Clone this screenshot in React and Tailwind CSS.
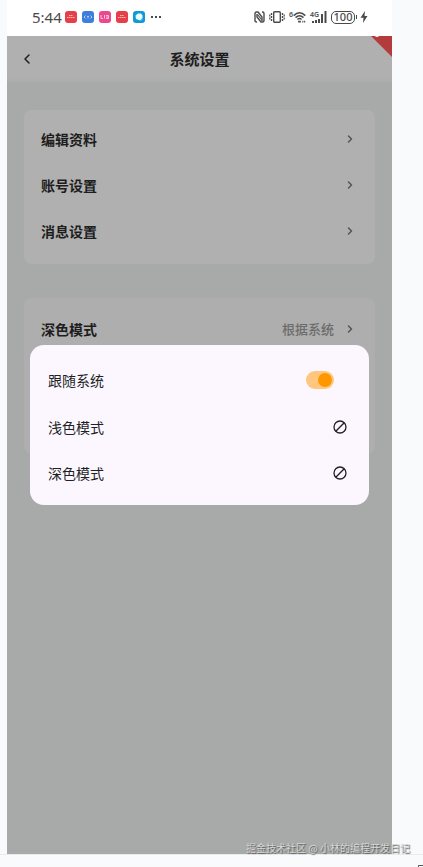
import React, { useState } from "react";
import { ChevronLeft, ChevronRight } from "lucide-react";

const accountRows = ["编辑资料", "账号设置", "消息设置"];

function AppBadge({ className, children }) {
  return (
    <svg viewBox="0 0 12 12" className={`size-3 rounded-[3px] ${className}`} aria-hidden="true">
      {children}
    </svg>
  );
}

function StatusBar() {
  return (
    <div className="flex h-9 shrink-0 items-center justify-between bg-white pr-6 pb-[2px] pl-[25px] text-[#4a4a4a]">
      <div className="flex items-center gap-[3px]">
        <span className="font-['Noto_Sans',sans-serif] text-[15px] leading-5">5:44</span>
        <div className="flex items-center gap-[5px]">
          <AppBadge className="bg-[#e5404a]">
            <path d="M2 6.5h8M4 4.5h4" stroke="#ffb9b4" strokeWidth="1" strokeDasharray="1.5 .5" />
          </AppBadge>
          <AppBadge className="bg-[#3f7fdc]">
            <path d="M3.5 4.5 2 6l1.5 1.5M8.5 4.5 10 6 8.5 7.5M5 5l1 1 1-1M6 6v1.5" fill="none" stroke="#c4dcff" strokeWidth=".8" />
          </AppBadge>
          <AppBadge className="bg-[#ea4a8d]">
            <path d="M2 4v3.5h2M5.5 4v3.5M7 4.5h2.5v3H7M7 6h2.5" fill="none" stroke="#ffd0e4" strokeWidth=".9" />
          </AppBadge>
          <AppBadge className="bg-[#e5404a]">
            <path d="M2 6.5h8M4 4.5h4" stroke="#ffb9b4" strokeWidth="1" strokeDasharray="1.5 .5" />
          </AppBadge>
          <AppBadge className="bg-[#0d9bd7]">
            <path d="M2.500 4.500 5 2.500H8L9.500 4.500V7L7 9.500 3 8Z" fill="#e9fbff" />
            <path d="M8 9.500 9.500 8" stroke="#7be0ff" strokeWidth=".8" />
          </AppBadge>
          <svg width="12" height="4" viewBox="0 0 12 4" fill="#4a4a4a" aria-hidden="true">
            <rect x="1" y="1" width="2" height="2" />
            <rect x="5" y="1" width="2" height="2" />
            <rect x="9" y="1" width="2" height="2" />
          </svg>
        </div>
      </div>
      <div className="flex items-center gap-1">
        <svg width="11" height="12" viewBox="0 0 11 12" fill="none" stroke="#4a4a4a" aria-hidden="true">
          <path d="M3 11H2.5Q1 11 1 9.500v-7Q1 1 2.500 1H4L8 6v4M8 1h.5Q10 1 10 2.500v7Q10 11 8.500 11H7L3 6V3" strokeWidth="1.400" />
          <path d="M3.500 3.500 7.500 8.500" strokeWidth="1.200" />
        </svg>
        <svg width="16" height="12" viewBox="0 0 16 12" fill="none" stroke="#4a4a4a" aria-hidden="true">
          <rect x="4.700" y=".7" width="6.600" height="10.600" rx="1" strokeWidth="1.400" />
          <path d="M2.500 2v8M13.500 2v8" strokeWidth="1.400" strokeDasharray="2 1" />
          <path d="M.8 3.500v5M15.200 3.500v5" strokeWidth="1.200" strokeDasharray="2 1" />
        </svg>
        <div className="flex items-start">
          <span className="font-['Noto_Sans',sans-serif] text-[7px] leading-[7px] font-semibold">6</span>
          <svg width="13" height="12" viewBox="0 0 14 13" fill="none" stroke="#4a4a4a" aria-hidden="true">
            <path d="M.7 5Q7-1.200 13.300 5M2.700 7.200q4.300-4 8.600 0M4.700 9.200q2.300-2 4.600 0" strokeWidth="1.600" />
            <path d="M5.500 11.500h3M10 11.500h1.200M12 11.500h1.200" strokeWidth="1.800" />
          </svg>
        </div>
        <div className="flex items-start">
          <span className="h-3 font-['Noto_Sans',sans-serif] text-[7px] leading-[7px] font-semibold">4G</span>
          <svg width="15" height="12" viewBox="0 0 15 12" fill="#4a4a4a" className="-ml-[7px]" aria-hidden="true">
            <rect x="0" y="10" width="2" height="2" />
            <rect x="3" y="9" width="2" height="3" />
            <rect x="6" y="8" width="2" height="4" />
            <rect x="9" y="3" width="2" height="9" />
            <rect x="12.500" y="0" width="2" height="12" />
          </svg>
        </div>
        <div className="flex items-center gap-px">
          <span className="flex h-[13px] w-6 items-center justify-center rounded-[5px] border border-[#4a4a4a] font-['Noto_Sans',sans-serif] text-[11px] leading-3 font-medium">
            100
          </span>
          <span className="h-1 w-px bg-[#4a4a4a]" />
          <svg width="8" height="12" viewBox="0 0 8 12" fill="#4a4a4a" className="ml-[2px]" aria-hidden="true">
            <path d="M5 0 .5 6.800H3.500L3 12 7.500 5H4.500Z" />
          </svg>
        </div>
      </div>
    </div>
  );
}

function SettingRow({ label, value }) {
  return (
    <button type="button" className="flex h-[46px] w-full items-center text-left">
      <span className="flex-1 text-[14px] leading-5 font-bold text-[#1d1d1d]">{label}</span>
      {value && <span className="mr-[10px] text-[13px] leading-5 font-medium text-[#6c6c6c]">{value}</span>}
      <ChevronRight size={12} strokeWidth={3} className="text-[#555]" aria-hidden="true" />
    </button>
  );
}

function ModeOption({ label, checked, onSelect }) {
  return (
    <label className="flex h-[46px] cursor-pointer items-center justify-between">
      <span>{label}</span>
      <input type="radio" name="mode" className="sr-only" checked={checked} onChange={onSelect} />
      <svg width="14" height="14" viewBox="0 0 14 14" fill="none" stroke="#211f26" strokeWidth="1.300" aria-hidden="true">
        <circle cx="7" cy="7" r="6" />
        <path d="M2.800 11.200 11.200 2.800" />
      </svg>
    </label>
  );
}

function ModeDialog() {
  const [follow, setFollow] = useState(true);
  const [mode, setMode] = useState("");
  return (
    <div role="dialog" aria-label="深色模式" className="w-full rounded-[14px] bg-[#fcf7fe] pt-[11px] pr-[22px] pb-[9px] pl-[18px] text-[14px] leading-5 text-[#211f26]">
      <label className="flex h-12 cursor-pointer items-center justify-between pr-[13px]">
        <span>跟随系统</span>
        <input
          type="checkbox"
          role="switch"
          checked={follow}
          onChange={(e) => setFollow(e.target.checked)}
          className="h-[18px] w-7 appearance-none rounded-full bg-[#d9d5dc] p-[2px] before:block before:size-[14px] before:rounded-full before:bg-white checked:bg-[#ffc77d] checked:pl-[12px] checked:before:bg-[#ff9800]"
        />
      </label>
      <ModeOption label="浅色模式" checked={mode === "light"} onSelect={() => setMode("light")} />
      <ModeOption label="深色模式" checked={mode === "dark"} onSelect={() => setMode("dark")} />
    </div>
  );
}

export default function App() {
  return (
    <div className="relative flex min-h-screen flex-col bg-[#f8fafb] font-['Noto_Sans_CJK_SC',sans-serif]">
      <div className="flex flex-1 border-b border-[#e9ecec] pr-[31px] pl-[7px]">
        <div className="relative flex flex-1 flex-col bg-[#a8aaa9]">
          <StatusBar />
          <header className="relative flex h-[46px] shrink-0 items-center justify-center bg-linear-to-b from-[#b0b0b0] from-85% to-[#acadad]">
            <button type="button" aria-label="返回" className="absolute left-3 text-[#1d1d1d]">
              <ChevronLeft size={16} strokeWidth={2.2} />
            </button>
            <h1 className="text-[15px] leading-6 font-bold text-[#1d1d1d]">系统设置</h1>
            <svg width="21" height="21" viewBox="0 0 21 21" className="absolute top-0 right-0" aria-hidden="true">
              <path d="M0 0h21v21Z" fill="#b43b3b" />
              <path d="M4 0h4l-1 1H5Z" fill="#f6e5e5" />
            </svg>
          </header>
          <main className="flex flex-col gap-[34px] px-[17px] pt-7">
            <section className="rounded-[8px] bg-[#b0b0b0] pt-[6px] pr-[19px] pb-[10px] pl-[17px]">
              {accountRows.map((label) => (
                <SettingRow key={label} label={label} />
              ))}
            </section>
            <section className="min-h-[156px] rounded-[8px] bg-[#aeaeae] pt-2 pr-[19px] pl-[17px]">
              <SettingRow label="深色模式" value="根据系统" />
            </section>
          </main>
          <div className="absolute inset-0 flex items-center px-[23px] pb-1">
            <ModeDialog />
          </div>
        </div>
      </div>
      <div className="h-3 shrink-0" />
      <p className="absolute right-[13px] bottom-3 text-[10px] leading-[14px] text-[#d5d7d6] [text-shadow:1px_1px_1px_#555]">
        掘金技术社区 @ 小林的编程开发日记
      </p>
      <svg width="5" height="2" viewBox="0 0 5 2" className="absolute right-0 bottom-0" aria-hidden="true">
        <path d="M.5 2V.5H5" fill="none" stroke="#555" />
      </svg>
    </div>
  );
}
